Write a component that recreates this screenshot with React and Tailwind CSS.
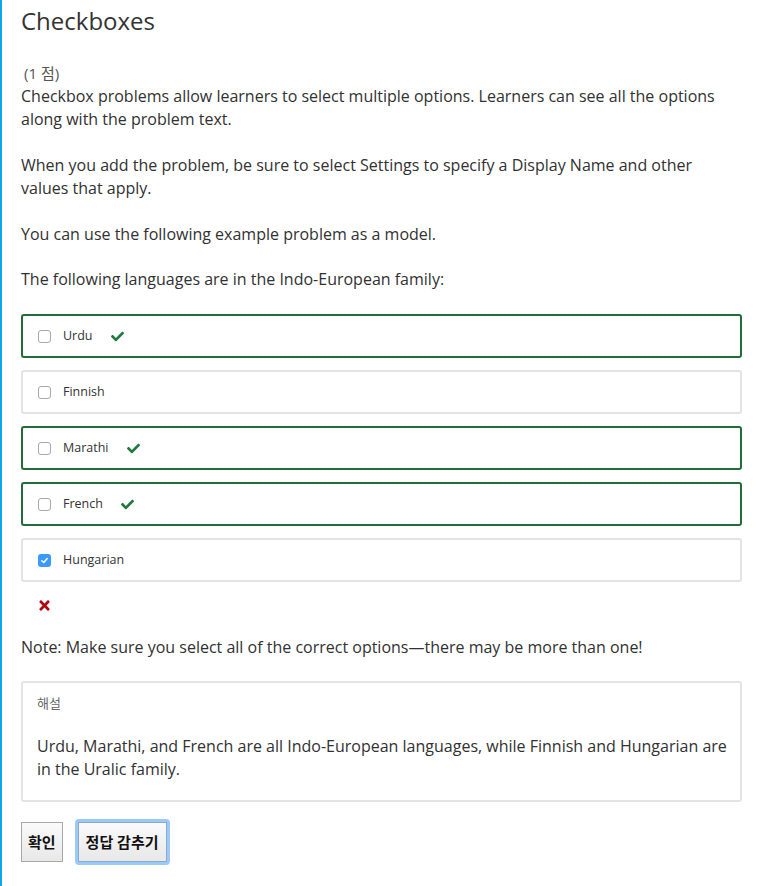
import React from "react";
import { FaCheck, FaTimes } from "react-icons/fa";

const font = { fontFamily: '"Open Sans", "Noto Sans CJK KR", sans-serif' };

function Box({ checked }) {
  if (checked) {
    return (
      <span className="flex h-[13px] w-[13px] items-center justify-center rounded-[3px] bg-[#3b99fc]">
        <svg width="9" height="9" viewBox="0 0 10 10">
          <path d="M2 5.2 L4.2 7.3 L8 2.8" fill="none" stroke="white" strokeWidth="1.6" strokeLinecap="round" strokeLinejoin="round" />
        </svg>
      </span>
    );
  }
  return <span className="block h-[13px] w-[13px] rounded-[3px] border border-[#a9a9a9] bg-white" />;
}

function Option({ label, correct, checked }) {
  return (
    <div
      className={
        "flex h-[44px] items-center rounded-[3px] border-2 pl-[15px] " +
        (correct ? "border-[#246b3b]" : "border-[#e4e4e4]")
      }
    >
      <Box checked={checked} />
      <span className="ml-[12px] text-[12.5px] text-[#333]">{label}</span>
      {correct && <FaCheck className="ml-[18px] text-[13px] text-[#1f7a3e]" />}
    </div>
  );
}

export default function App() {
  return (
    <div className="min-h-[886px] border-l-2 border-[#0ea5e9] bg-white text-[#313131]" style={font}>
      <div className="w-[740px] pl-[19px] pt-[6px]">
        <h2 className="text-[24px] leading-[29px] text-[#333]">Checkboxes</h2>
        <div className="mt-[26px] pl-[3px] text-[15px] leading-[24px] text-[#555]">(1 점)</div>
        <div className="text-[16px] leading-[23px]">
          <p>Checkbox problems allow learners to select multiple options. Learners can see all the options along with the problem text.</p>
          <p className="mt-[23px]">When you add the problem, be sure to select Settings to specify a Display Name and other values that apply.</p>
          <p className="mt-[23px]">You can use the following example problem as a model.</p>
          <p className="mt-[22px]">The following languages are in the Indo-European family:</p>
        </div>
        <div className="mt-[23px] flex flex-col gap-[12px]">
          <Option label="Urdu" correct />
          <Option label="Finnish" />
          <Option label="Marathi" correct />
          <Option label="French" correct />
          <Option label="Hungarian" checked />
        </div>
        <div className="mt-[16px] pl-[16px]">
          <FaTimes className="text-[15px] text-[#b20610]" />
        </div>
        <p className="mt-[23px] text-[16px] leading-[23px]">
          Note: Make sure you select all of the correct options—there may be more than one!
        </p>
        <div className="mt-[22px] rounded-[3px] border-2 border-[#e4e4e4] pb-[19px] pl-[14px] pr-[6px] pt-[9px]">
          <div className="text-[13px] leading-[22px] text-[#666]">해설</div>
          <p className="mt-[21px] text-[16px] leading-[23px]">
            Urdu, Marathi, and French are all Indo-European languages, while Finnish and Hungarian are in the Uralic family.
          </p>
        </div>
        <div className="mt-[17px] flex items-center gap-[12px]">
          <button className="h-[40px] border border-[#a8a8a8] bg-gradient-to-b from-[#fafafa] to-[#e8e8e8] px-[6px] text-[15px] font-bold text-[#111]">
            확인
          </button>
          <button className="h-[46px] rounded-[4px] border-[3px] border-[#9ccaf8] p-0">
            <span className="flex h-[40px] items-center border border-[#8aa9cc] bg-gradient-to-b from-[#fafafa] to-[#e8e8e8] px-[7px] text-[15px] font-bold text-[#111]">
              정답 감추기
            </span>
          </button>
        </div>
      </div>
    </div>
  );
}
